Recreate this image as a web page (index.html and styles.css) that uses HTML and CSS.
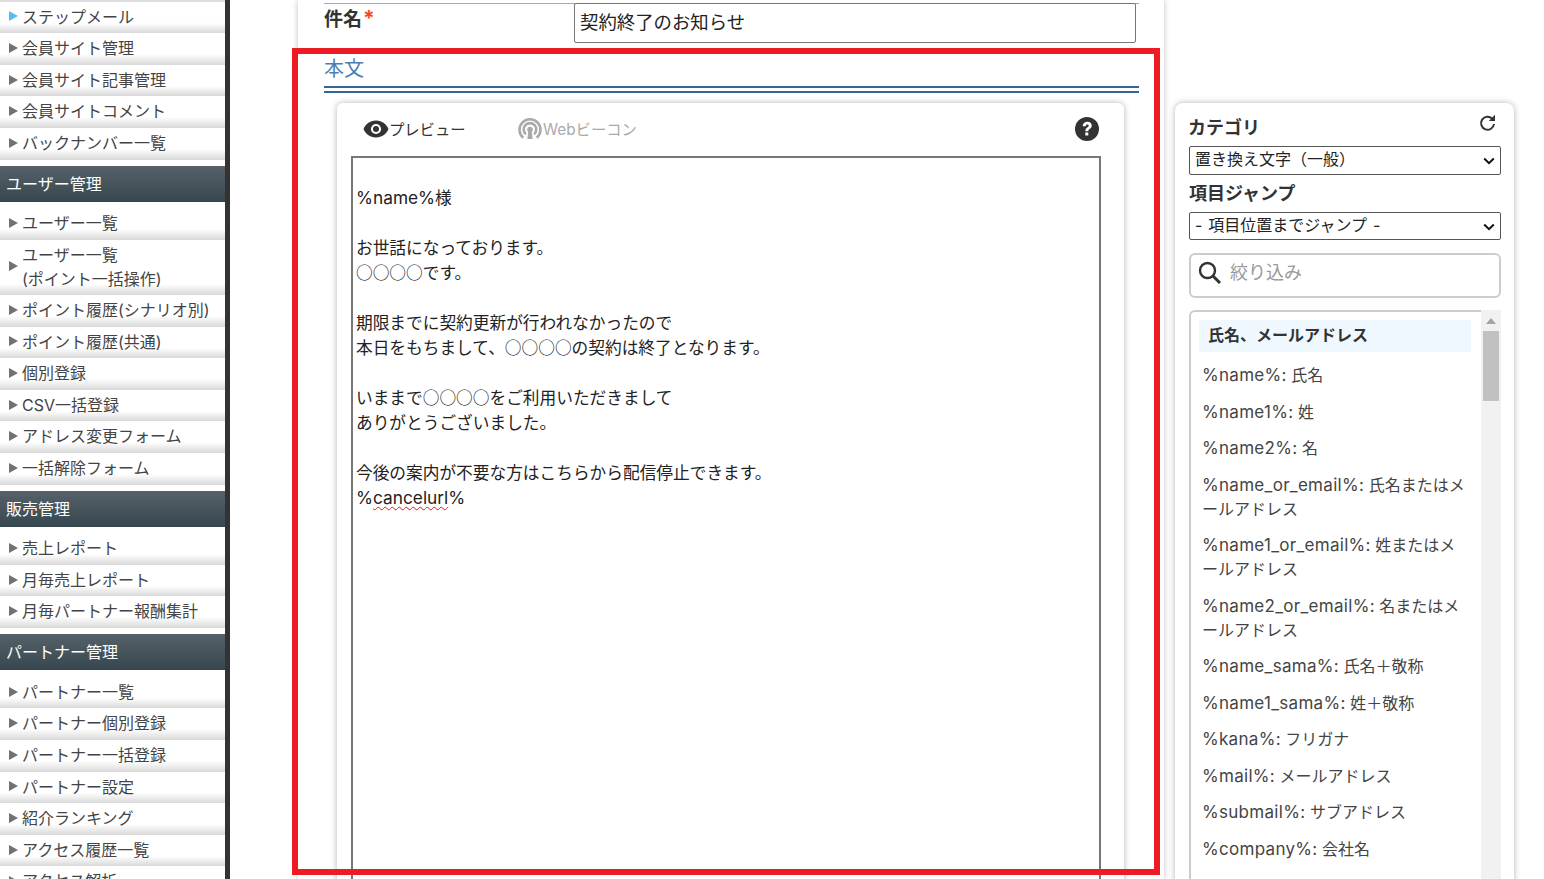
FILE: index.html
```html
<!DOCTYPE html>
<html lang="ja">
<head>
<meta charset="utf-8">
<title>契約終了のお知らせ</title>
<link rel="stylesheet" href="styles.css">
</head>
<body>
<div class="page">
  <nav class="sidebar">
    <div class="sliver"></div>
    <ul class="menu">
      <li class="item active">ステップメール</li>
      <li class="item">会員サイト管理</li>
      <li class="item">会員サイト記事管理</li>
      <li class="item">会員サイトコメント</li>
      <li class="item">バックナンバー一覧</li>
    </ul>
    <h2 class="section">ユーザー管理</h2>
    <ul class="menu pad">
      <li class="item">ユーザー一覧</li>
      <li class="item two">ユーザー一覧<br>(ポイント一括操作)</li>
      <li class="item">ポイント履歴(シナリオ別)</li>
      <li class="item">ポイント履歴(共通)</li>
      <li class="item">個別登録</li>
      <li class="item">CSV一括登録</li>
      <li class="item">アドレス変更フォーム</li>
      <li class="item">一括解除フォーム</li>
    </ul>
    <h2 class="section">販売管理</h2>
    <ul class="menu pad">
      <li class="item">売上レポート</li>
      <li class="item">月毎売上レポート</li>
      <li class="item">月毎パートナー報酬集計</li>
    </ul>
    <h2 class="section">パートナー管理</h2>
    <ul class="menu pad">
      <li class="item">パートナー一覧</li>
      <li class="item">パートナー個別登録</li>
      <li class="item">パートナー一括登録</li>
      <li class="item">パートナー設定</li>
      <li class="item">紹介ランキング</li>
      <li class="item">アクセス履歴一覧</li>
      <li class="item">アクセス解析</li>
    </ul>
  </nav>

  <main class="main">
    <div class="subject">
      <div class="subject-label">件名<span class="req">*</span></div>
      <div class="subject-input">契約終了のお知らせ</div>
    </div>
    <h3 class="body-title">本文</h3>
    <div class="editor">
      <div class="toolbar">
        <span class="tool">
          <svg class="eye" viewBox="0 0 26 18" width="26" height="18"><path fill="#333" fill-rule="evenodd" d="M13 .5C6.800.5 2.400 4.300.5 9c1.900 4.700 6.300 8.500 12.500 8.500S23.600 13.700 25.500 9C23.600 4.300 19.200.5 13 .5zm0 13.600a5.100 5.100 0 1 1 0-10.200 5.100 5.100 0 0 1 0 10.200z"/><circle cx="13" cy="9" r="3" fill="#333"/></svg><span class="tool-text">プレビュー</span>
        </span>
        <span class="tool muted">
          <svg viewBox="0 0 26 24" width="26" height="24"><g fill="none" stroke="#aaa" stroke-width="2.600"><path d="M6.300 20.800a10.500 10.500 0 1 1 13.400 0"/><path d="M9 17.300a6.300 6.300 0 1 1 8 0"/></g><circle cx="13" cy="12.500" r="2.800" fill="#aaa"/><path d="M11.300 14h3.400l1 8h-5.400z" fill="#aaa"/></svg><span class="tool-text">Webビーコン</span>
        </span>
        <svg class="help" viewBox="0 0 24 24" width="24" height="24"><circle cx="12" cy="12" r="12" fill="#333"/><path d="M7.600 9.200c.1-2.700 2.100-4.500 4.700-4.500 2.700 0 4.500 1.700 4.500 3.900 0 1.600-.8 2.600-2.100 3.500-1.100.7-1.400 1.100-1.400 2.200h-3c0-2 .6-2.900 1.900-3.800 1-.7 1.500-1.100 1.500-1.800 0-.8-.6-1.300-1.400-1.300-.9 0-1.500.6-1.600 1.800z M10.300 15.500h3v3h-3z" fill="#fff"/></svg>
      </div>
      <div class="textarea"><p>&nbsp;</p><p><span class="latin">%name%</span>様</p><p>&nbsp;</p><p>お世話になっております。</p><p>○○○○です。</p><p>&nbsp;</p><p>期限までに契約更新が行われなかったので</p><p>本日をもちまして、○○○○の契約は終了となります。</p><p>&nbsp;</p><p>いままで○○○○をご利用いただきまして</p><p>ありがとうございました。</p><p>&nbsp;</p><p>今後の案内が不要な方はこちらから配信停止できます。</p><p><span class="latin">%<span class="typo">cancelurl</span>%</span></p></div>
    </div>
  </main>

  <aside class="side">
    <div class="side-head">
      <div class="side-title">カテゴリ</div>
      <svg class="reload" viewBox="0 0 20 20" width="20" height="20"><path d="M16 11a6.500 6.500 0 1 1-2-5.500" fill="none" stroke="#333" stroke-width="2"/><path d="M17 1.800v6.200h-6.200z" fill="#333"/></svg>
    </div>
    <div class="select s1"><span>置き換え文字（一般）</span><svg viewBox="0 0 12 8" width="12" height="8"><path d="M1.200 1.500L6 6.200l4.800-4.700" fill="none" stroke="#111" stroke-width="2"/></svg></div>
    <div class="side-title t2">項目ジャンプ</div>
    <div class="select s2"><span>- 項目位置までジャンプ -</span><svg viewBox="0 0 12 8" width="12" height="8"><path d="M1.200 1.500L6 6.200l4.800-4.700" fill="none" stroke="#111" stroke-width="2"/></svg></div>
    <div class="search">
      <svg viewBox="0 0 24 24" width="24" height="24"><circle cx="9.500" cy="9.500" r="7.500" fill="none" stroke="#333" stroke-width="2.400"/><path d="M15 15l7 7" stroke="#333" stroke-width="3" fill="none"/></svg>
      <span class="search-text">絞り込み</span>
    </div>
    <div class="listbox">
      <div class="list">
        <div class="list-head">氏名、メールアドレス</div>
        <div class="row"><span class="latin">%name%:</span> 氏名</div>
        <div class="row"><span class="latin">%name1%:</span> 姓</div>
        <div class="row"><span class="latin">%name2%:</span> 名</div>
        <div class="row"><span class="latin">%name_or_email%:</span> 氏名またはメールアドレス</div>
        <div class="row"><span class="latin">%name1_or_email%:</span> 姓またはメールアドレス</div>
        <div class="row"><span class="latin">%name2_or_email%:</span> 名またはメールアドレス</div>
        <div class="row"><span class="latin">%name_sama%:</span> 氏名＋敬称</div>
        <div class="row"><span class="latin">%name1_sama%:</span> 姓＋敬称</div>
        <div class="row"><span class="latin">%kana%:</span> フリガナ</div>
        <div class="row"><span class="latin">%mail%:</span> メールアドレス</div>
        <div class="row"><span class="latin">%submail%:</span> サブアドレス</div>
        <div class="row"><span class="latin">%company%:</span> 会社名</div>
      </div>
      <div class="scrollbar"><div class="arrow"></div><div class="thumb"></div></div>
    </div>
  </aside>
</div>
<div class="highlight"></div>
</body>
</html>
```
FILE: styles.css
```css
* { box-sizing: border-box; }
html, body { margin: 0; padding: 0; height: 879px; overflow: hidden; background: #fff; }
body { font-family: "Inter", "Noto Sans CJK JP", sans-serif; color: #333; position: relative; }
p, ul, h2, h3 { margin: 0; padding: 0; font-weight: normal; }
ul { list-style: none; }
.page { display: flex; height: 879px; align-items: flex-start; overflow: hidden; }

.sidebar { width: 230px; height: 879px; flex: none; overflow: hidden; border-right: 5px solid #333; background: #fff; }
.sliver { height: 1.600px; background: #ddd; }
.item { height: 31.600px; padding-left: 22px; font-size: 16px; line-height: 31.900px; color: #444; position: relative; background: linear-gradient(#fff 0, #fff 21px, #d9d9d9 100%); white-space: nowrap; }
.item::before { content: ""; position: absolute; left: 9px; top: 50%; margin-top: -6px; border-left: 9px solid #6e7377; border-top: 5.500px solid transparent; border-bottom: 5.500px solid transparent; }
.item.active::before { border-left-color: #5bbcf5; }
.item.two { height: 55px; line-height: 24px; padding-top: 3px; background: linear-gradient(#fff 0, #fff 44px, #d9d9d9 100%); }
.menu.pad { padding-top: 6.400px; }
.section { margin-top: 6px; height: 36.400px; background: linear-gradient(#566168, #37474f); color: #fff; font-size: 16px; line-height: 37px; padding-left: 6px; }

.main { width: 866px; flex: none; margin-left: 68px; height: 879px; padding: 3px 25px 0 26px; box-shadow: 0 0 6px rgba(0,0,0,.25); background: #fff; }
.subject { display: flex; height: 40px; border-top: 1px solid #aaa; }
.subject-label { width: 250px; font-weight: 700; font-size: 19px; line-height: 30px; }
.req { color: #f04a23; margin-left: 1px; font-size: 21px; }
.subject-input { width: 562px; height: 40px; margin-top: -1px; border: 1px solid #777; border-radius: 2px; font-size: 18.400px; line-height: 36px; padding-left: 5px; color: #222; }
.body-title { margin-top: 10px; font-size: 20px; line-height: 32px; color: #4d7fae; border-bottom: 7px double #369; height: 40px; width: 815px; }
.editor { margin: 10px 0 0 13px; width: 787px; height: 800px; border-radius: 6px; box-shadow: 0 0 6px rgba(0,0,0,.3); padding: 0 23px 0 14px; background: #fff; }
.toolbar { height: 51px; margin-bottom: 2px; display: flex; align-items: center; padding-left: 12px; font-size: 15.300px; color: #333; }
.tool { display: flex; align-items: center; width: 154px; }
.tool.muted { color: #aaa; width: auto; }
.tool-text { margin-bottom: 2px; }
.help { margin-left: auto; margin-right: 2px; }
.textarea { width: 750px; height: 760px; border: 2px solid #777; border-bottom: 0; padding: 2px 0 0 3px; font-family: "Noto Sans CJK JP", sans-serif; font-size: 16.700px; line-height: 25px; color: #222; }
.textarea p { height: 25px; white-space: nowrap; }
.textarea .latin { font-family: "Inter", sans-serif; font-size: 17.300px; }
.typo { text-decoration: underline wavy #e01b1b 1px; text-underline-offset: 2px; }

.side { width: 339px; flex: none; margin: 103px 0 0 11px; height: 800px; padding: 0 13px; border-radius: 8px; box-shadow: 0 0 6px rgba(0,0,0,.3); background: #fff; overflow: hidden; }
.side-head { display: flex; justify-content: space-between; height: 43px; }
.side-title { font-weight: 700; font-size: 18px; line-height: 28px; padding-top: 11px; height: 43px; }
.reload { margin: 10px 3px 0 0; }
.select { display: flex; align-items: center; justify-content: space-between; width: 312px; margin-left: 1px; background: #fff; border: 1px solid #555; border-radius: 2px; font-size: 16px; word-spacing: 1.500px; color: #222; padding: 0 5px 0 5px; }
.select span { margin-bottom: 5px; }
.select svg { flex: none; margin-top: 1px; }
.s1 { height: 29px; }
.s2 { height: 28px; }
.side-title.t2 { padding-top: 5px; height: 37px; margin-left: 1px; }
.search { display: flex; align-items: center; gap: 8px; margin: 13px 0 0 1px; width: 312px; height: 45px; border: 2px solid #ccc; border-radius: 6px; padding: 0 0 6px 7px; font-size: 18px; color: #999; }
.search-text { margin-bottom: 4px; }
.listbox { display: flex; margin: 12px 0 0 1px; width: 312px; height: 600px; border-top: 2px solid #ccc; border-left: 2px solid #ccc; border-radius: 6px 0 0 0; }
.list { flex: 1; padding: 8px 10px 0 8px; min-width: 0; }
.list-head { height: 32px; background: #f0f8ff; font-weight: 700; font-size: 16px; line-height: 30px; padding-left: 9px; color: #333; }
.row { padding: 6.250px 4px 6.250px 3px; font-size: 16px; line-height: 24px; color: #444; }
.row .latin { font-size: 17px; letter-spacing: .3px; }
.list-head + .row { margin-top: 5px; }
.scrollbar { width: 20px; flex: none; background: #f1f1f1; margin-top: -2px; padding: 0 2px; }
.arrow { width: 0; margin: 8px auto 0; border-left: 5px solid transparent; border-right: 5px solid transparent; border-bottom: 6px solid #a3a3a3; }
.thumb { height: 70px; margin-top: 7px; background: #c1c1c1; }

.highlight { position: absolute; left: 292px; top: 48px; width: 868px; height: 827px; border: 6px solid #ed1c24; pointer-events: none; }
```
